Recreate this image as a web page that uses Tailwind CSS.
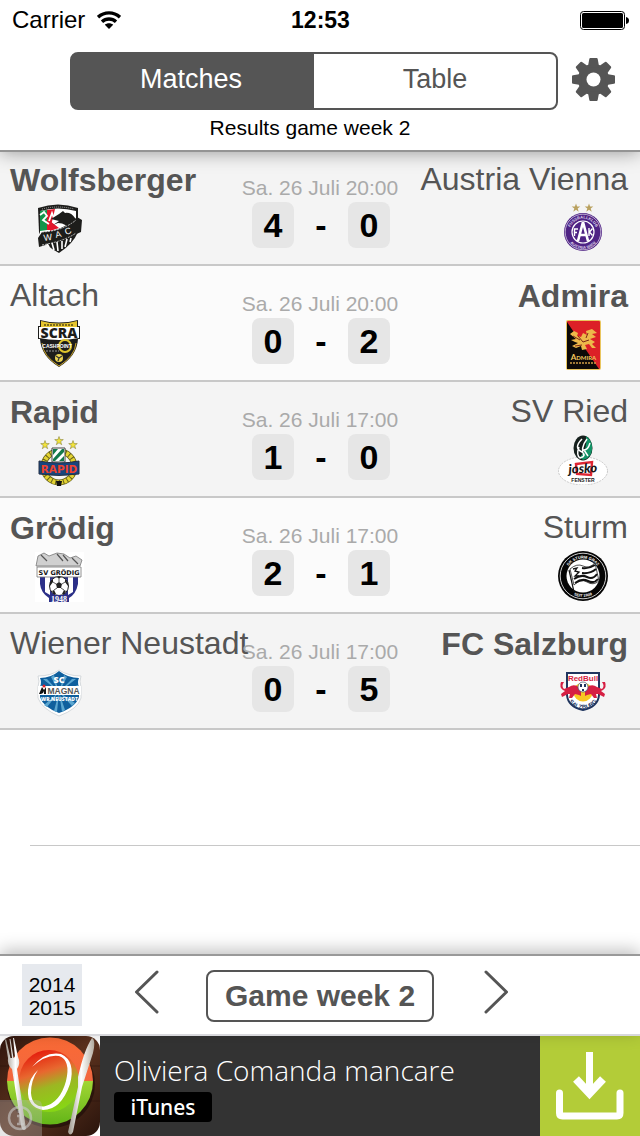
<!DOCTYPE html>
<html lang="en">
<head>
<meta charset="utf-8">
<meta name="viewport" content="width=device-width, initial-scale=1">
<title>Matches</title>
<script src="https://cdn.jsdelivr.net/npm/@tailwindcss/browser@4"></script>
</head>
<body class="flex min-h-screen flex-col bg-white font-['Liberation_Sans',Arial,sans-serif] text-[#555]">

<header class="relative z-10 -mb-0.5 border-b-2 border-[#949494] bg-white shadow-[0_0_18px_rgba(0,0,0,0.4)]">
  <div class="grid h-10 grid-cols-3 items-center pr-[11px] pl-3 text-black">
    <div class="flex items-center gap-3">
      <span class="text-2xl">Carrier</span>
      <svg class="h-[18px] w-6" viewBox="0 0 24 18" fill="none" stroke="#000" stroke-width="3.4" role="img" aria-label="Wi-Fi">
        <path d="M1 6.2C7.300 .4 16.700 .4 23 6.200M5 10.700C9 7 15 7 19 10.700"/>
        <path d="M12 18L7.800 13.700C10.300 11.700 13.700 11.700 16.200 13.700Z" fill="#000" stroke="none"/>
      </svg>
    </div>
    <time class="text-center text-[23px] font-bold">12:53</time>
    <svg class="h-[19px] w-[49px] justify-self-end" viewBox="0 0 49 19" role="img" aria-label="Battery full">
      <rect x=".5" y=".5" width="44" height="18" rx="3" fill="#fff" stroke="#000"/>
      <rect x="2" y="2" width="41" height="15" rx="1.500" fill="#000"/>
      <path d="M46 6q3 .5 3 3.500t-3 3.500z"/>
    </svg>
  </div>
  <div class="flex items-center gap-3.5 pt-3 pr-[25px] pl-[70px]">
    <div class="grid h-[58px] flex-1 grid-cols-2 overflow-hidden rounded-lg border-2 border-[#555] bg-[linear-gradient(90deg,#555_50%,#fff_50%)] text-[27px]">
      <button type="button" class="bg-[#555] pr-1 pb-1 text-white">Matches</button>
      <button type="button" class="pb-1">Table</button>
    </div>
    <button type="button" aria-label="Settings" class="-mt-1">
      <svg class="block h-[43px] w-[43px]" viewBox="-21.500 -21.500 43 43" fill="#555">
        <defs><path id="tooth" d="M-3.200 -21.500H3.200Q4 -21.500 4.200 -20.500L5.300 -14.500 8 -12H-8L-5.300 -14.500-4.200 -20.500Q-4 -21.500-3.200 -21.500Z"/></defs>
        <circle r="15.500"/>
        <use href="#tooth"/><use href="#tooth" transform="rotate(45)"/><use href="#tooth" transform="rotate(90)"/><use href="#tooth" transform="rotate(135)"/>
        <use href="#tooth" transform="rotate(180)"/><use href="#tooth" transform="rotate(225)"/><use href="#tooth" transform="rotate(270)"/><use href="#tooth" transform="rotate(315)"/>
        <circle r="7" fill="#fff"/>
      </svg>
    </button>
  </div>
  <h1 class="pt-1.5 pr-10 pb-2.5 pl-5 text-center text-[21px] leading-6 text-black">Results game week 2</h1>
</header>

<main class="flex-1">
  <ul>
    <li class="grid h-[116px] grid-cols-[minmax(0,1fr)_160px_minmax(0,1fr)] border-b-2 border-[#c8c8c8] bg-[#f4f4f4]">
      <div class="flex flex-col items-start gap-1.5 pt-3 pl-2.5 whitespace-nowrap">
        <span class="text-[32px] leading-9 font-bold">Wolfsberger</span>
        <svg class="ml-[25px] h-[50px] w-[50px]" viewBox="0 0 50 50" role="img" aria-label="Wolfsberger crest">
          <path d="M3 4Q23-3 43 4V28Q38 40 24 49Q8 41 4 28Z" fill="#1d1d1b"/>
          <path d="M5 7Q23 2 41 7V27L5 34Z" fill="#fff"/>
          <path d="M5 7L12 6V26L5 27Z" fill="#13954b"/><path d="M12 6L20 5 15 26H12ZM15 17L24 24 15 27Z" fill="#e2162b"/>
          <path d="M5 11L9 8 12 12 8 16 14 20M14 17L17 9 20 17" fill="none" stroke="#fff" stroke-width="1.800"/>
          <path d="M7 5Q23 1 39 5" fill="none" stroke="#aaa" stroke-dasharray="1 1"/>
          <path d="M16 15L24 10 28 7 30 9Q36 8 40 14V26L34 27Q32 19 23 19L18 21 24 17Z" fill="#1d1d1b"/>
          <path d="M7 28Q28 27 42 13L47 16 46 28Q32 35 4 43L3 34Z" fill="#1d1d1b"/>
          <path d="M7 28Q28 27 41 16M7 41Q30 37 41 29" fill="none" stroke="#fff" stroke-width=".7" stroke-dasharray="2 1"/>
          <g fill="#fff" font-family="Liberation Sans" font-size="9"><text x="9" y="37" transform="rotate(-8 9 37)">W</text><text x="21" y="34" transform="rotate(-13 21 34)">A</text><text x="31" y="31" transform="rotate(-20 31 31)">C</text></g>
          <path d="M12 40L14 43M17 39L19 46M22 38L23 47M27 37V45M32 35L30 43M36 34L35 38" stroke="#fff" stroke-width="1.600"/>
        </svg>
      </div>
      <div class="flex flex-col items-center gap-0.5 pt-[26px]">
        <time class="text-[21px] leading-6 whitespace-nowrap text-[#aaa]">Sa. 26 Juli 20:00</time>
        <div class="grid grid-cols-[42px_54px_42px] pl-0.5 text-center text-[34px] leading-[46px] font-bold text-black"><span class="rounded-lg bg-[#e6e6e6]">4</span><span>-</span><span class="rounded-lg bg-[#e6e6e6]">0</span></div>
      </div>
      <div class="flex flex-col items-end gap-1.5 pt-[11px] pr-3 whitespace-nowrap">
        <span class="text-[32px] leading-9">Austria Vienna</span>
        <svg class="mr-5 h-[50px] w-[50px]" viewBox="0 0 50 50" role="img" aria-label="Austria Vienna crest">
          <defs>
            <path id="star" d="M0-4.500L1.100-1.400H4.300L1.700.6 2.700 3.700 0 1.800-2.700 3.700-1.700.6-4.300-1.400H-1.100Z"/>
            <path id="ringTop" d="M11.500 29A13.500 13.500 0 0 1 38.500 29"/><path id="ringBottom" d="M8 29A17 17 0 0 0 42 29"/>
          </defs>
          <g fill="#b9a15f"><use href="#star" x="18" y="5"/><use href="#star" x="31" y="5"/></g>
          <circle cx="25" cy="29" r="19" fill="#4f2384"/><circle cx="25" cy="29" r="17.800" fill="none" stroke="#fff" stroke-width=".6"/>
          <circle cx="25" cy="29" r="11" fill="#4f2384" stroke="#fff" stroke-width="1.200"/>
          <g fill="#ddd3ea" font-family="Liberation Sans" font-size="4" font-weight="bold" text-anchor="middle"><text><textPath href="#ringTop" startOffset="50%">FUSSBALLKLUB</textPath></text><text><textPath href="#ringBottom" startOffset="50%">AUSTRIA WIEN</textPath></text></g>
          <path d="M25 19L20 38M25 19L30 38M21 32H29" stroke="#fff" stroke-width="2.600" fill="none"/>
          <path d="M16.500 33V26H20M16.500 29.500H19M31 25V33M34.500 25.500L31.500 29 34.500 32.500" stroke="#fff" stroke-width="1.400" fill="none"/>
        </svg>
      </div>
    </li>

    <li class="grid h-[116px] grid-cols-[minmax(0,1fr)_160px_minmax(0,1fr)] border-b-2 border-[#c8c8c8] bg-[#fbfbfb]">
      <div class="flex flex-col items-start gap-1.5 pt-[11px] pl-2.5 whitespace-nowrap">
        <span class="text-[32px] leading-9">Altach</span>
        <svg class="ml-[25px] h-[50px] w-[50px]" viewBox="0 0 50 50" role="img" aria-label="Altach crest">
          <path d="M5 1Q24 6 43 1V7H45V20H43Q42 37 24 48Q6 37 5 20H3V7H5Z" fill="#1d1d1b"/>
          <path d="M6 2Q24 7 42 2V8H6Z" fill="#e5c530"/><path d="M9 6H39" stroke="#5b4d12" stroke-width="1.500" stroke-dasharray="2 1"/>
          <path d="M4 8H44V19Q24 23 4 19Z" fill="#fff"/>
          <text x="24" y="19" text-anchor="middle" font-family="Open Sans" font-size="14" font-weight="800" fill="#1d1d1b">SCRA</text>
          <path d="M7 24Q8 37 24 47Q40 37 41 24" fill="none" stroke="#cda72a" stroke-width="1"/>
          <circle cx="30" cy="27" r="6" fill="none" stroke="#dfc52c" stroke-width="2"/>
          <text x="22" y="29" text-anchor="middle" font-family="Liberation Sans" font-size="5" font-weight="bold" fill="#fff">CASHPOINT</text>
          <path d="M11 32H24" stroke="#999" stroke-dasharray="2 1"/>
          <circle cx="24" cy="39" r="4" fill="#ead451"/><path d="M21 37L24 39 27 37M24 39L23 42" fill="none" stroke="#333" stroke-width="1.200"/>
        </svg>
      </div>
      <div class="flex flex-col items-center gap-0.5 pt-[26px]">
        <time class="text-[21px] leading-6 whitespace-nowrap text-[#aaa]">Sa. 26 Juli 20:00</time>
        <div class="grid grid-cols-[42px_54px_42px] pl-0.5 text-center text-[34px] leading-[46px] font-bold text-black"><span class="rounded-lg bg-[#e6e6e6]">0</span><span>-</span><span class="rounded-lg bg-[#e6e6e6]">2</span></div>
      </div>
      <div class="flex flex-col items-end gap-1.5 pt-3 pr-3 whitespace-nowrap">
        <span class="text-[32px] leading-9 font-bold">Admira</span>
        <svg class="mr-5 h-[50px] w-[50px]" viewBox="0 0 50 50" role="img" aria-label="Admira crest">
          <rect x="8" y="0" width="35" height="50" rx="2" fill="#e9c65f"/><rect x="9" y="1" width="33" height="48" rx="1" fill="#dc2027"/>
          <path d="M9 2V49H41Z" fill="#0d0a08"/>
          <path d="M12 14L16 11 20 13 19 16 23 17 25 13 29 15 28 11 34 9 39 13 34 14 38 17 32 19 37 22 34 24 38 28 34 28 31 24 27 25 29 29 24 30 23 26 18 28 14 26 20 23 17 22 13 20 18 19Z" fill="#edb94a"/>
          <path d="M15 16L22 20M20 16L25 22 31 20M17 26L24 25M30 13L28 18" stroke="#7d2a17" stroke-width="1" fill="none"/>
          <text x="25.500" y="40" text-anchor="middle" font-family="Lato" font-size="8" font-weight="bold" fill="#f2c85e">A<tspan font-size="6">DMIRA</tspan></text>
          <path d="M12 43H39" stroke="#cf9f45" stroke-width="1.500" stroke-dasharray="2 1"/>
        </svg>
      </div>
    </li>

    <li class="grid h-[116px] grid-cols-[minmax(0,1fr)_160px_minmax(0,1fr)] border-b-2 border-[#c8c8c8] bg-[#f4f4f4]">
      <div class="flex flex-col items-start gap-1.5 pt-3 pl-2.5 whitespace-nowrap">
        <span class="text-[32px] leading-9 font-bold">Rapid</span>
        <svg class="ml-[25px] h-[50px] w-[50px]" viewBox="0 0 50 50" role="img" aria-label="Rapid crest">
          <g fill="#f3e43b" stroke="#77732b" stroke-width=".5"><use href="#star" x="10" y="9"/><use href="#star" x="24" y="5"/><use href="#star" x="38" y="9"/></g>
          <circle cx="24" cy="31" r="15.500" fill="none" stroke="#66611c" stroke-width="6"/>
          <circle cx="24" cy="31" r="15.500" fill="none" stroke="#e3d331" stroke-width="4.500" stroke-dasharray="3 1"/>
          <path d="M17 12H30V26H17Z" fill="#fff" stroke="#444"/><path d="M18 13H23L18 19ZM18 23L27 13H29V16L20 25H18ZM24 25L29 20V25Z" fill="#147a4b"/>
          <path d="M4 25Q24 29 44 25V38Q24 41 4 38Z" fill="#17457d" stroke="#263044"/>
          <text x="24" y="36.500" text-anchor="middle" font-family="DejaVu Sans" font-size="10.500" font-weight="bold" fill="#f0432e">RAPID</text>
          <path d="M21 45H27L26 50H22Z" fill="#111"/>
        </svg>
      </div>
      <div class="flex flex-col items-center gap-0.5 pt-[26px]">
        <time class="text-[21px] leading-6 whitespace-nowrap text-[#aaa]">Sa. 26 Juli 17:00</time>
        <div class="grid grid-cols-[42px_54px_42px] pl-0.5 text-center text-[34px] leading-[46px] font-bold text-black"><span class="rounded-lg bg-[#e6e6e6]">1</span><span>-</span><span class="rounded-lg bg-[#e6e6e6]">0</span></div>
      </div>
      <div class="flex flex-col items-end gap-1.5 pt-[11px] pr-3 whitespace-nowrap">
        <span class="text-[32px] leading-9">SV Ried</span>
        <svg class="mr-5 h-[50px] w-[50px]" viewBox="0 0 50 50" role="img" aria-label="SV Ried crest">
          <ellipse cx="25" cy="36" rx="24.500" ry="14" fill="#fff" stroke="#aaa" stroke-width=".6" stroke-dasharray="2 1"/>
          <ellipse cx="25" cy="13" rx="9.500" ry="12.500" fill="#16201d"/><path d="M28 1Q35 6 34 15Q33 23 25 25L22 22Q30 14 28 1Z" fill="#129366"/>
          <path d="M24 4Q15 13 24 17Q29 21 22 23Q18 20 21 12M29 4Q22 13 26 21M32 8Q30 15 26 15L30 21" fill="none" stroke="#fff" stroke-width="1.500"/>
          <path d="M18 29L34 27 33 40 19 39Z" fill="none" stroke="#df2634" stroke-width="2.400"/>
          <text x="25" y="38" text-anchor="middle" font-family="Lato" font-size="13" font-style="italic" font-weight="900" fill="#171717" transform="rotate(-3 25 36)">josko</text>
          <text x="25" y="47" text-anchor="middle" font-family="Liberation Sans" font-size="5" font-weight="bold" fill="#222">FENSTER</text>
        </svg>
      </div>
    </li>

    <li class="grid h-[116px] grid-cols-[minmax(0,1fr)_160px_minmax(0,1fr)] border-b-2 border-[#c8c8c8] bg-[#fbfbfb]">
      <div class="flex flex-col items-start gap-1.5 pt-3 pl-2.5 whitespace-nowrap">
        <span class="text-[32px] leading-9 font-bold">Grödig</span>
        <svg class="ml-[25px] h-[50px] w-[50px]" viewBox="0 0 50 50" role="img" aria-label="Grödig crest">
          <path d="M0 0H49V50H0Z" fill="#fff"/>
          <path d="M1 14L3 4 9 1 14 4 22 1 29 2 35 6 41 4 47 8 45 14Z" fill="#d0d0d0" stroke="#777" stroke-width=".8"/>
          <path d="M6 3L12 9M22 2L28 9M28 3L33 9M37 6L43 12" stroke="#555" stroke-width="1.200"/>
          <path d="M5 25H43V32Q41 42 34 46H14Q6 41 5 32Z" fill="#2c3088"/><path d="M10 25H15V43L10 40ZM33 25H38V40L33 43ZM22 25H26V30H22Z" fill="#fff"/>
          <path d="M2 15H46V25H2Z" fill="#fff" stroke="#777" stroke-width=".8"/>
          <text x="24" y="22.500" text-anchor="middle" font-family="DejaVu Sans" font-size="6.500" font-weight="bold" fill="#151515">SV GRÖDIG</text>
          <circle cx="24" cy="34" r="9.500" fill="#fff" stroke="#222"/><path d="M21 32L24 30 27 32 26 36H22ZM15 30L18 27V30L15 34ZM30 27L33 31V34L30 30ZM17 39L19 38 21 42 19 42ZM29 38L31 39 29 42 27 42ZM22 25H26L24 27Z" fill="#202020"/>
          <path d="M24 27V30M18 30L21 32M30 30L27 32M22 36L19 38M26 36L29 38" stroke="#333" stroke-width=".8"/>
          <path d="M14 43H34V50H14Z" fill="#2c3088"/><text x="24" y="49.500" text-anchor="middle" font-family="Liberation Serif" font-size="8" font-weight="bold" fill="#fff">1948</text>
        </svg>
      </div>
      <div class="flex flex-col items-center gap-0.5 pt-[26px]">
        <time class="text-[21px] leading-6 whitespace-nowrap text-[#aaa]">Sa. 26 Juli 17:00</time>
        <div class="grid grid-cols-[42px_54px_42px] pl-0.5 text-center text-[34px] leading-[46px] font-bold text-black"><span class="rounded-lg bg-[#e6e6e6]">2</span><span>-</span><span class="rounded-lg bg-[#e6e6e6]">1</span></div>
      </div>
      <div class="flex flex-col items-end gap-1.5 pt-[11px] pr-3 whitespace-nowrap">
        <span class="text-[32px] leading-9">Sturm</span>
        <svg class="mr-5 h-[50px] w-[50px]" viewBox="0 0 50 50" role="img" aria-label="Sturm crest">
          <defs><path id="sturmTop" d="M7.500 25A17.500 17.500 0 0 1 42.500 25"/><path id="sturmBottom" d="M4 25A21 21 0 0 0 46 25"/></defs>
          <circle cx="25" cy="25" r="25" fill="#050505"/><circle cx="25" cy="25" r="22.800" fill="none" stroke="#fff" stroke-width=".8"/><circle cx="25" cy="25" r="16.500" fill="#fff"/>
          <g fill="#fff" font-family="Liberation Sans" font-size="4" font-weight="bold" text-anchor="middle"><text><textPath href="#sturmTop" startOffset="50%">SK STURM GRAZ</textPath></text><text><textPath href="#sturmBottom" startOffset="50%">SEIT 1909</textPath></text></g>
          <path d="M11 19L16 41" stroke="#111" stroke-width="1.200"/>
          <path d="M12 18Q19 12 25 15T37 12L41 30Q35 35 29 31T16 34Z" fill="#fff" stroke="#222" stroke-width=".8"/>
          <path d="M24 17Q31 18 37 14M24 22Q32 23 38 18M16 28Q23 23 29 26T39 23M17 32Q24 27 30 30T40 28" fill="none" stroke="#111" stroke-width="2"/>
          <path d="M15 18L19 17 17 20 21 21 17 25 21 25" fill="none" stroke="#111" stroke-width="1.300"/>
        </svg>
      </div>
    </li>

    <li class="grid h-[116px] grid-cols-[minmax(0,1fr)_160px_minmax(0,1fr)] border-b-2 border-[#c8c8c8] bg-[#f4f4f4]">
      <div class="flex flex-col items-start gap-1.5 pt-[11px] pl-2.5 whitespace-nowrap">
        <span class="text-[32px] leading-9">Wiener Neustadt</span>
        <svg class="ml-[25px] h-[50px] w-[50px]" viewBox="0 0 50 50" role="img" aria-label="Wiener Neustadt crest">
          <path d="M3 9Q16 9 24 3Q33 9 46 9Q44 14 46 20V31Q43 42 24 49Q7 42 3 31V20Q5 14 3 9Z" fill="#fff" stroke="#c5cbd0" stroke-width=".7"/>
          <path d="M5 11Q16 11 24 4Q33 11 44 11Q42 15 44 20V30Q41 40 24 46Q8 40 5 30V20Q7 15 5 11Z" fill="#0f5f9d"/>
          <path d="M24 25L8 12H12ZM24 25L16 10 19 8ZM24 25L29 8 32 10ZM24 25L37 12H41ZM24 25L43 18V21ZM24 25L5 18V21ZM24 25L9 38 12 40ZM24 25L19 44 22 45ZM24 25L27 45 30 43ZM24 25L37 39 40 36Z" fill="#5ba6d0"/>
          <text x="24" y="16" text-anchor="middle" font-family="Open Sans" font-size="9" font-weight="800" fill="#fff">SC</text>
          <path d="M3 19H46V28H3Z" fill="#fff"/><path d="M4 27L7 20 9 23 11 20V27H9V24L8 26 6 27Z" fill="#111"/><circle cx="9" cy="19" r="1.500" fill="#e1222b"/>
          <text x="28.500" y="27" text-anchor="middle" font-family="Liberation Sans" font-size="8.500" font-weight="bold" fill="#555">MAGNA</text>
          <text x="24.500" y="34" text-anchor="middle" font-family="Open Sans" font-size="5" font-weight="800" fill="#fff">WR.NEUSTADT</text>
        </svg>
      </div>
      <div class="flex flex-col items-center gap-0.5 pt-[26px]">
        <time class="text-[21px] leading-6 whitespace-nowrap text-[#aaa]">Sa. 26 Juli 17:00</time>
        <div class="grid grid-cols-[42px_54px_42px] pl-0.5 text-center text-[34px] leading-[46px] font-bold text-black"><span class="rounded-lg bg-[#e6e6e6]">0</span><span>-</span><span class="rounded-lg bg-[#e6e6e6]">5</span></div>
      </div>
      <div class="flex flex-col items-end gap-1.5 pt-3 pr-3 whitespace-nowrap">
        <span class="text-[32px] leading-9 font-bold">FC Salzburg</span>
        <svg class="mr-5 h-[50px] w-[50px]" viewBox="0 0 50 50" role="img" aria-label="FC Salzburg crest">
          <defs><path id="salz" d="M9 30Q14 41 25 41Q36 41 41 30"/></defs>
          <path d="M9 5H41V27Q40 39 25 42Q10 39 9 27Z" fill="#fff" stroke="#20355f" stroke-width="2"/>
          <circle cx="25" cy="24" r="9.500" fill="#f8c622"/>
          <path id="bull" d="M23 22L19 18Q15 16 11 19L6 21Q3 18 6 14L3 14Q1 19 5 22L7 23 3 26 4 29 10 26 12 26 11 30 14 30 17 26 21 27 23 28Z" fill="#d61f43"/>
          <use href="#bull" transform="matrix(-1 0 0 1 50 0)"/>
          <circle cx="25" cy="19" r="5" fill="#fff" stroke="#425070" stroke-width=".7"/><path d="M22 16H24V19H22ZM26 16H28V19H26ZM24 21H26V23H24Z" fill="#20355f"/>
          <text x="25" y="13" text-anchor="middle" font-family="Liberation Sans" font-size="8" font-weight="bold" fill="#d61f43">RedBull</text>
          <text font-family="Liberation Sans" font-size="6" font-weight="bold" fill="#20355f" text-anchor="middle"><textPath href="#salz" startOffset="50%">SALZBURG</textPath></text>
        </svg>
      </div>
    </li>
    <li class="ml-[30px] h-[116px] border-b border-[#c8c8c8]"></li>
  </ul>
</main>

<footer>
  <nav aria-label="Game week" class="relative z-10 flex items-start border-t-2 border-b-2 border-t-[#999] border-b-[#d8d8dc] bg-white pt-2 pb-2 pl-[22px] shadow-[0_-4px_16px_rgba(0,0,0,0.25)]">
    <button type="button" class="w-[60px] bg-[#e6e9ee] pt-[9px] pb-[7px] text-[21px] leading-[23px] text-black">2014<br>2015</button>
    <div class="ml-[52px] flex items-start pt-1.5">
      <button type="button" aria-label="Previous game week"><svg class="block h-11 w-[25px]" viewBox="0 0 25 44" fill="none" stroke="#555" stroke-width="3" stroke-linecap="round" stroke-linejoin="round"><path d="M23 2L2.500 22 23 42"/></svg></button>
      <button type="button" class="mr-[50px] ml-[47px] h-[52px] w-[228px] rounded-lg border-2 border-[#555] text-[30px] leading-9 font-bold whitespace-nowrap">Game week 2</button>
      <button type="button" aria-label="Next game week"><svg class="block h-11 w-[25px]" viewBox="0 0 25 44" fill="none" stroke="#555" stroke-width="3" stroke-linecap="round" stroke-linejoin="round"><path d="M2 2L22.500 22 2 42"/></svg></button>
    </div>
  </nav>
  <a href="#" class="flex h-[100px] bg-[#333] text-white">
    <span class="bg-white">
      <svg class="block h-[100px] w-[100px]" viewBox="0 0 100 100" role="img" aria-label="Oliviera Comanda mancare app icon">
        <defs>
          <clipPath id="appShape"><rect width="100" height="100" rx="14"/></clipPath>
          <linearGradient id="wood" x2="1" y2="1"><stop stop-color="#30150c"/><stop offset=".5" stop-color="#5c321e"/><stop offset="1" stop-color="#2a140c"/></linearGradient>
          <linearGradient id="rim" x2="0" y2="1"><stop stop-color="#fa6a35"/><stop offset=".499" stop-color="#f2673f"/><stop offset=".5" stop-color="#a2d634"/><stop offset="1" stop-color="#63b518"/></linearGradient>
          <linearGradient id="dish" x1=".3" x2=".6" y2="1"><stop stop-color="#e4180b"/><stop offset=".35" stop-color="#e8672f"/><stop offset=".6" stop-color="#9cb722"/><stop offset="1" stop-color="#86d813"/></linearGradient>
          <linearGradient id="metal"><stop stop-color="#9c958a"/><stop offset=".5" stop-color="#fff"/><stop offset="1" stop-color="#b5ada0"/></linearGradient>
        </defs>
        <g clip-path="url(#appShape)">
          <rect width="100" height="100" fill="url(#wood)"/>
          <path d="M0 30H100M0 65H100" stroke="#241009" stroke-opacity=".4"/>
          <ellipse cx="51" cy="48" rx="44" ry="44" fill="#1b0b06" opacity=".6"/>
          <ellipse cx="50" cy="45" rx="43" ry="43.500" fill="url(#rim)"/>
          <ellipse cx="49" cy="45" rx="30" ry="31" fill="url(#dish)"/>
          <path d="M32 31Q45 15 61 18Q76 25 70 48Q61 74 43 74Q27 71 28 54Q29 42 38 34Q31 44 31 57Q32 71 44 70.500Q60 67 66 45Q71 24 59 20Q46 18 32 31Z" fill="#fff"/>
          <path d="M5 4L8 22Q7 29 12 33L21 89Q22 96 26 93L17 33Q21 27 18 21L14 2 13 2 15 21 13.500 22 10.500 3 9.500 3 12 22 10.500 22 6 3Z" fill="url(#metal)"/>
          <path d="M92 2Q96 4 93 17L82 51 73 96Q70 101 68 96L78 51V41Q84 14 92 2Z" fill="url(#metal)"/>
        </g>
        <path d="M0 64H36Q42 64 42 70V100H0Z" fill="#bbb" fill-opacity=".35"/>
        <g fill="none" stroke="#ccc" stroke-opacity=".6" stroke-width="2.500"><circle cx="20" cy="82" r="11"/><path d="M17 80H20V88M17 88H24M19 74V77"/></g>
      </svg>
    </span>
    <span class="flex flex-1 flex-col items-start gap-1 pt-4 pl-3.5 font-['Open_Sans',sans-serif] whitespace-nowrap">
      <span class="text-[28px] leading-9 font-light">Oliviera Comanda mancare</span>
      <span class="w-[98px] rounded-sm bg-black text-center font-['Noto_Sans','Open_Sans',sans-serif] text-[21px] leading-[30px] font-medium">iTunes</span>
    </span>
    <span class="flex w-[100px] items-center justify-center bg-[#b3cc38]">
      <svg class="h-[68px] w-[68px]" viewBox="0 0 68 68" fill="none" stroke="#fff" role="img" aria-label="Download">
        <path d="M33.500 0V38" stroke-width="7"/><path d="M20 27L33.500 41.500 47 27" stroke-width="8"/>
        <path d="M3.500 41V61Q3.500 64 6.500 64H61Q64 64 64 61V41" stroke-width="7" stroke-linecap="round"/>
      </svg>
    </span>
  </a>
</footer>
</body>
</html>
